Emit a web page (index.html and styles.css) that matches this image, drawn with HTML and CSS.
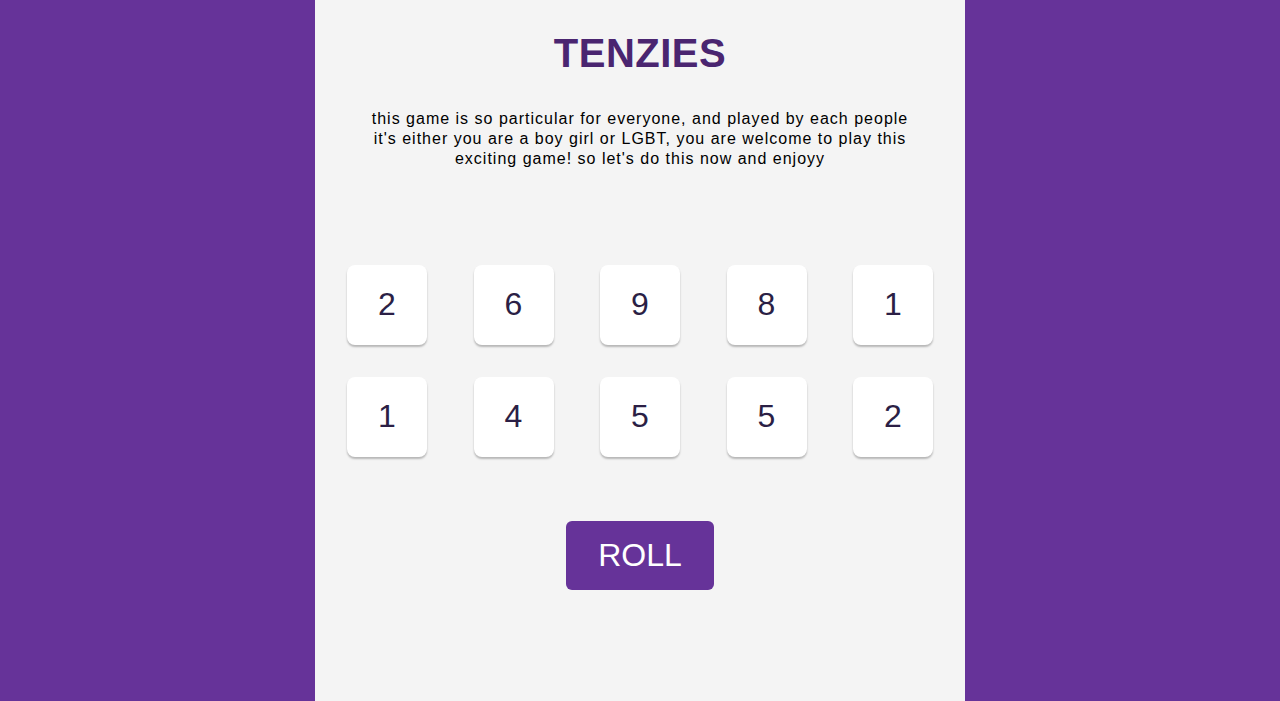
FILE: index.html
```html
<!DOCTYPE html>
<html lang="en">
<head>
<meta charset="utf-8">
<title>Tenzies</title>
<link rel="stylesheet" href="styles.css">
</head>
<body>
<main class="board">
  <h1 class="title">TENZIES</h1>
  <p class="intro">this game is so particular for everyone, and played by each people it's either you are a boy girl or LGBT, you are welcome to play this exciting game! so let's do this now and enjoyy</p>
  <div class="dice">
    <div class="die">2</div>
    <div class="die">6</div>
    <div class="die">9</div>
    <div class="die">8</div>
    <div class="die">1</div>
    <div class="die">1</div>
    <div class="die">4</div>
    <div class="die">5</div>
    <div class="die">5</div>
    <div class="die">2</div>
  </div>
  <button class="roll">ROLL</button>
</main>
</body>
</html>
```
FILE: styles.css
```css
* { box-sizing: border-box; }
html, body { margin: 0; padding: 0; height: 100%; }
body {
  background: #663399;
  font-family: "Liberation Sans", Arial, sans-serif;
  display: flex;
  justify-content: center;
}
.board {
  width: 650px;
  height: 701px;
  background: #f4f4f4;
  padding: 30px 32px 0;
  display: flex;
  flex-direction: column;
  align-items: center;
}
.title {
  margin: 0;
  font-size: 40px;
  line-height: 46px;
  font-weight: bold;
  color: #4a2570;
  letter-spacing: 0.5px;
}
.intro {
  margin: 33px 0 0;
  width: 545px;
  text-align: center;
  font-size: 16px;
  line-height: 20px;
  letter-spacing: 1px;
  color: #000;
}
.dice {
  margin-top: 96px;
  width: 100%;
  display: grid;
  grid-template-columns: repeat(5, 80px);
  justify-content: space-between;
  row-gap: 32px;
}
.die {
  width: 80px;
  height: 80px;
  background: #fff;
  border-radius: 8px;
  box-shadow: 0 2px 2px rgba(0, 0, 0, 0.25);
  display: flex;
  align-items: center;
  justify-content: center;
  padding-bottom: 2px;
  font-size: 32px;
  color: #2b1f45;
}
.roll {
  margin-top: 64px;
  width: 148px;
  height: 69px;
  background: #663399;
  color: #fff;
  border: none;
  border-radius: 6px;
  font-family: "Liberation Sans", Arial, sans-serif;
  font-size: 32px;
  cursor: pointer;
}
```
